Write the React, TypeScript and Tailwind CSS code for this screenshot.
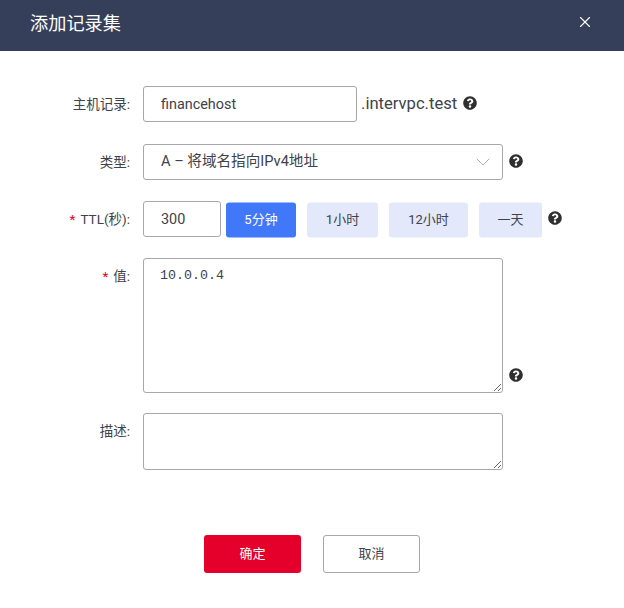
import * as React from "react";
import { X, ChevronDown } from "lucide-react";
import { FaQuestionCircle } from "react-icons/fa";

const font = "[font-family:Roboto,'Noto_Sans_CJK_SC',sans-serif]";

function Help({ className = "" }: { className?: string }) {
  return <FaQuestionCircle size={14} className={`shrink-0 text-[#2f2f2f] ${className}`} />;
}

function Label({ children, required }: { children: React.ReactNode; required?: boolean }) {
  return (
    <div className="w-[130px] shrink-0 text-right text-[13.5px] leading-9 text-[#40424a]">
      {required && <span className="mr-[5px] text-[#e4002b]">*</span>}
      {children}
    </div>
  );
}

const presets = [
  { text: "1小时", w: "w-[71px]" },
  { text: "12小时", w: "w-[79px]" },
  { text: "一天", w: "w-[63px]" },
];

export default function App() {
  return (
    <div className={`h-[608px] w-[624px] overflow-hidden bg-white ${font}`}>
      <div className="flex h-[51px] items-start justify-between bg-[#363f5a] pl-[30px] pr-[30px]">
        <h1 className="mt-[10px] text-[18.2px] leading-7 font-normal text-white">添加记录集</h1>
        <X size={18} strokeWidth={1.5} className="mt-[13px] text-white" />
      </div>

      <form className="pt-[35px]">
        <div className="flex items-center gap-[13px]">
          <Label>主机记录:</Label>
          <input
            readOnly
            value="financehost"
            className="h-9 w-[214px] rounded-[3px] border border-[#a5a7b2] pl-[17px] text-[14.4px] text-[#40424a] outline-none"
          />
          <div className="-ml-[9px] flex items-center gap-[6px]">
            <span className="text-[16.6px] text-[#40424a]">.intervpc.test</span>
            <Help className="-translate-y-px" />
          </div>
        </div>

        <div className="mt-[22px] flex items-center gap-[13px]">
          <Label>类型:</Label>
          <div className="flex h-9 w-[360px] items-center justify-between rounded-[3px] border border-[#a5a7b2] pl-[17px] pr-[7px] text-[14.6px] text-[#40424a]">
            <span>A – 将域名指向IPv4地址</span>
            <ChevronDown size={24} strokeWidth={0.9} className="text-[#a5a7b2]" />
          </div>
          <Help className="-ml-[7px] -translate-y-px" />
        </div>

        <div className="mt-[21px] flex items-center gap-[13px]">
          <Label required>TTL(秒):</Label>
          <div className="flex items-center">
            <input
              readOnly
              value="300"
              className="h-9 w-[78px] rounded-[3px] border border-[#a5a7b2] pl-[17px] text-[14.4px] text-[#40424a] outline-none"
            />
            <button
              type="button"
              className="ml-[5px] h-[35px] w-[70px] translate-y-[0.5px] rounded-[3px] bg-[#4178fa] text-[13px] text-white"
            >
              5分钟
            </button>
            {presets.map((p) => (
              <button
                key={p.text}
                type="button"
                className={`ml-[11px] h-[35px] translate-y-[0.5px] rounded-[3px] bg-[#e3e9fb] text-[13px] text-[#40424a] ${p.w}`}
              >
                {p.text}
              </button>
            ))}
            <Help className="ml-[6px] -translate-y-px" />
          </div>
        </div>

        <div className="mt-[21px] flex items-start gap-[13px]">
          <Label required>值:</Label>
          <textarea
            readOnly
            value="10.0.0.4"
            className="h-[135px] w-[360px] rounded-[3px] border border-[#a5a7b2] px-[16px] py-[7px] font-mono text-[13.33px] text-[#40424a] outline-none"
          />
          <Help className="-ml-[7px] mt-[110px]" />
        </div>

        <div className="mt-[20px] flex items-start gap-[13px]">
          <Label>描述:</Label>
          <textarea
            readOnly
            className="h-[57px] w-[360px] rounded-[3px] border border-[#a5a7b2] px-[16px] py-[7px] text-sm outline-none"
          />
        </div>

        <div className="mt-[65px] flex gap-[22px] pl-[204px]">
          <button type="button" className="h-[38px] w-[97px] rounded-[3px] bg-[#e4002b] text-[13px] text-white">
            确定
          </button>
          <button
            type="button"
            className="h-[38px] w-[97px] rounded-[3px] border border-[#a5a7b2] bg-white text-[13px] text-[#40424a]"
          >
            取消
          </button>
        </div>
      </form>
    </div>
  );
}
